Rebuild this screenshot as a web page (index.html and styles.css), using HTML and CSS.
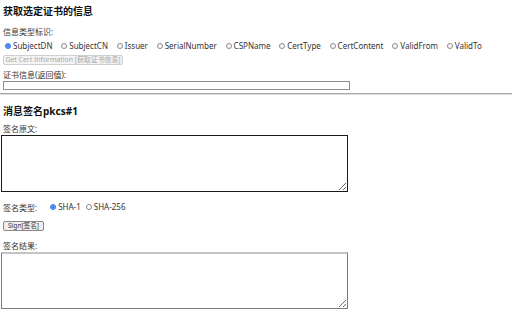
FILE: index.html
```html
<!DOCTYPE html>
<html lang="zh-CN">
<head>
<meta charset="utf-8">
<title>证书</title>
<link rel="stylesheet" href="styles.css">
</head>
<body>
<div class="sec">
  <h3 class="title">获取选定证书的信息</h3>
  <div class="lbl lbl-first">信息类型标识:</div>
  <div class="radios">
    <label class="opt"><input type="radio" name="t" checked><span>SubjectDN</span></label>
    <label class="opt"><input type="radio" name="t"><span>SubjectCN</span></label>
    <label class="opt"><input type="radio" name="t"><span>Issuer</span></label>
    <label class="opt"><input type="radio" name="t"><span>SerialNumber</span></label>
    <label class="opt"><input type="radio" name="t"><span>CSPName</span></label>
    <label class="opt"><input type="radio" name="t"><span>CertType</span></label>
    <label class="opt"><input type="radio" name="t"><span>CertContent</span></label>
    <label class="opt"><input type="radio" name="t"><span>ValidFrom</span></label>
    <label class="opt"><input type="radio" name="t"><span>ValidTo</span></label>
  </div>
  <button class="btn btn-get" disabled>Get Cert Information [获取证书信息]</button>
  <div class="lbl lbl-ret">证书信息(返回值):</div>
  <input class="field" type="text">
</div>
<hr class="sep">
<div class="sec">
  <h3 class="title title-2">消息签名pkcs#1</h3>
  <div class="lbl lbl-src">签名原文:</div>
  <textarea class="area area-src"></textarea>
  <div class="radios row-type">
    <span class="type-lbl">签名类型:</span>
    <label class="opt"><input type="radio" name="h" checked><span>SHA-1</span></label>
    <label class="opt"><input type="radio" name="h"><span>SHA-256</span></label>
  </div>
  <button class="btn btn-sign">Sign[签名]</button>
  <div class="lbl lbl-res">签名结果:</div>
  <textarea class="area area-res"></textarea>
</div>
</body>
</html>
```
FILE: styles.css
```css
html, body {
  margin: 0;
  padding: 0;
  background: #fff;
}
body {
  font-family: "Noto Sans", "Noto Sans CJK SC", sans-serif;
  font-size: 8px;
  color: #222;
  width: 512px;
  height: 320px;
  overflow: hidden;
}
.sec {
  padding-left: 3px;
}
.title {
  margin: 5px 0 0;
  font-size: 10px;
  line-height: 12px;
  font-weight: bold;
  color: #111;
}
.title-2 {
  margin-top: 10px;
}
.lbl {
  line-height: 10px;
  height: 10px;
  color: #333;
}
.lbl-first { margin-top: 10px; }
.lbl-ret { margin-top: 5px; }
.lbl-src { margin-top: 7px; }
.lbl-res { margin-top: 10px; }
.radios {
  display: flex;
  align-items: center;
  height: 10px;
  margin-top: 4px;
  gap: 6.8px;
  color: #333;
}
.opt {
  display: flex;
  align-items: center;
  gap: 1px;
  line-height: 10px;
}
.opt input {
  appearance: none;
  -webkit-appearance: none;
  margin: 0 1px 0 2px;
  width: 6px;
  height: 6px;
  border: 1px solid #888;
  border-radius: 50%;
  box-sizing: border-box;
  background: #fff;
}
.opt input:checked {
  border-color: #3a7ff0;
  background: #3a7ff0;
  box-shadow: inset 0 0 0 0.5px #8db6f8;
}
.btn {
  display: block;
  margin: 4px 0 0;
  padding: 0 2px;
  height: 10px;
  line-height: 8px;
  font-family: "Noto Sans", "Noto Sans CJK SC", sans-serif;
  font-size: 6.6px;
  background: #efefef;
  border: 1px solid #b4b4b4;
  border-radius: 2px;
  box-sizing: border-box;
  white-space: nowrap;
}
.btn-get {
  width: 120px;
  font-size: 6.9px;
  padding: 0 1px;
  color: #a8a8a8;
  border-color: #d0d0d0;
  background: #f3f3f3;
}
.btn-sign {
  margin-top: 9px;
  color: #333;
  border-color: #888;
  padding: 0 4px;
}
.field {
  display: block;
  margin: 1px 0 0;
  width: 347px;
  height: 9px;
  box-sizing: border-box;
  border: 1px solid #8d8d8d;
  padding: 0;
}
.sep {
  margin: 3px 0 0;
  border: none;
  border-top: 1px solid #a8a8a8;
  border-bottom: 1px solid #dcdcdc;
  height: 0;
}
.area {
  display: block;
  margin: 1px 0 0 -2px;
  width: 347px;
  height: 57px;
  box-sizing: border-box;
  padding: 0;
  resize: both;
}
.area-src {
  border: 1px solid #1a1a1a;
}
.area-res {
  border: 1px solid #7a7a7a;
  border-top: 2px solid #c4c4c4;
}
.row-type {
  margin-top: 10px;
  gap: 3px;
}
.type-lbl {
  margin-right: 8px;
}
```
